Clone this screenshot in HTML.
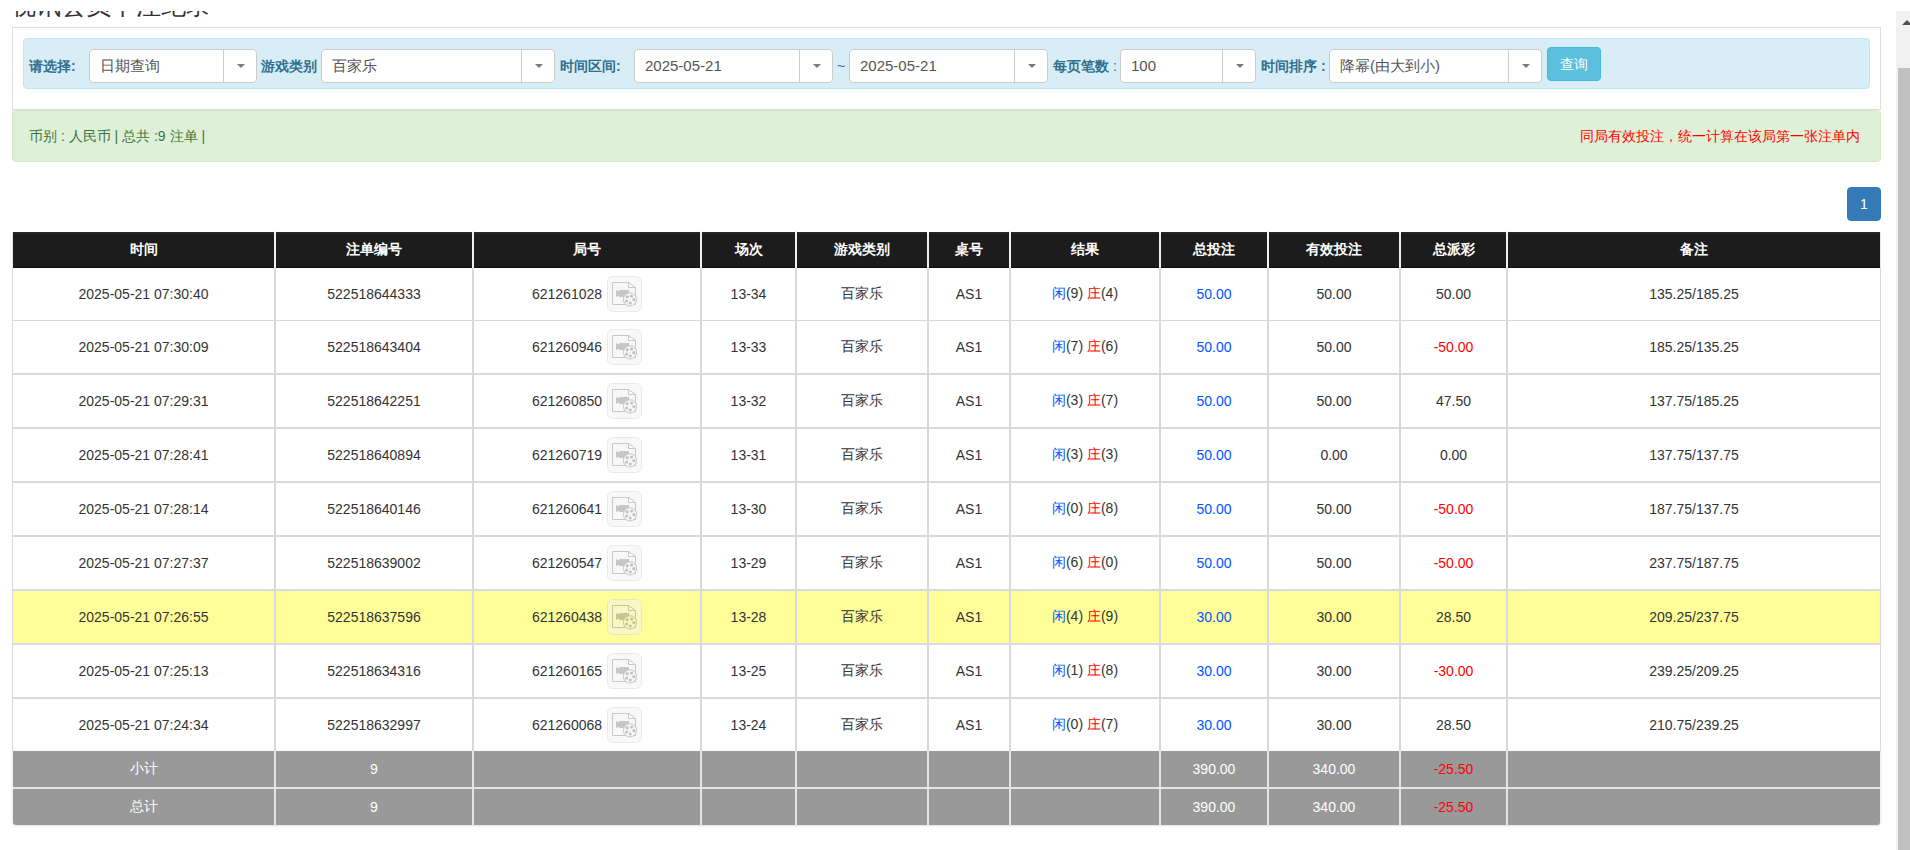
<!DOCTYPE html>
<html><head><meta charset="utf-8"><title>视讯会员下注纪录</title>
<style>
*{box-sizing:border-box;margin:0;padding:0}
html,body{width:1910px;height:850px;overflow:hidden;background:#fff}
body{font-family:"Liberation Sans",sans-serif;font-size:14px;color:#333;position:relative}
.abs{position:absolute}
.title{position:absolute;left:11px;top:-10px;font-size:25px;line-height:30px;color:#333;white-space:nowrap}
.panel{position:absolute;left:12px;top:27px;width:1869px;height:83px;border:1px solid #ddd;background:#fff}
.filter{position:absolute;left:23px;top:38px;width:1847px;height:51px;background:#d9edf7;border:1px solid #bce8f1;border-radius:4px}
.lbl{position:absolute;top:56px;line-height:20px;font-size:14px;font-weight:bold;color:#31708f;white-space:nowrap}
.sel{position:absolute;top:49px;height:34px;background:#fff;border:1px solid #ccc;border-radius:4px}
.sel .t{position:absolute;left:10px;top:0;line-height:32px;font-size:15px;color:#555;white-space:nowrap}
.sel .d{position:absolute;top:0;bottom:0;width:1px;background:#ccc}
.sel .ar{position:absolute;top:14px;width:0;height:0;border-left:4px solid transparent;border-right:4px solid transparent;border-top:4px solid #7b7b7b}
.btn{position:absolute;left:1547px;top:47px;width:54px;height:34px;background:#5bc0de;border:1px solid #46b8da;border-radius:4px;color:#fff;font-size:14px;line-height:32px;text-align:center}
.alert{position:absolute;left:12px;top:110px;width:1869px;height:52px;background:#dff0d8;border:1px solid #d6e9c6;border-radius:4px;color:#3c763d}
.alert .l{position:absolute;left:16px;top:15px;line-height:20px;white-space:nowrap}
.alert .r{position:absolute;right:20px;top:15px;line-height:20px;color:#f00;white-space:nowrap}
.page{position:absolute;left:1847px;top:187px;width:34px;height:34px;background:#337ab7;border:1px solid #337ab7;border-radius:4px;color:#fff;text-align:center;line-height:32px;font-size:14px}
.hd{position:absolute;left:13px;top:232px;width:1867px;height:36px;background:#1c1c1c;border-top:2px solid #272727;border-bottom:1px solid #0d0d0d}
.hdl{position:absolute;top:232px;width:1px;height:36px;background:#e6e6e6}
.cell{position:absolute;display:flex;align-items:center;justify-content:center;white-space:nowrap}
.hc{color:#fff;font-weight:bold;font-size:14px}
.ic{display:inline-block;vertical-align:middle;margin-left:5px;opacity:.5}
.in{display:block;white-space:nowrap}
.cover{position:absolute;left:0;top:0;width:1910px;height:11px;background:#fff}
.bl{color:#0055ff}.rd{color:#ff0000}
.ft{color:#fff}
.sbtrack{position:absolute;left:1896px;top:11px;width:14px;height:839px;background:#f1f1f1}
.sbthumb{position:absolute;left:1898px;top:68px;width:12px;height:782px;background:#c1c1c1}
.sbarrow{position:absolute;left:1902px;top:20px;width:0;height:0;border-left:5px solid transparent;border-right:5px solid transparent;border-bottom:5px solid #505050}
</style></head><body>
<div class="title">视讯会员下注纪录</div>
<div class="panel"></div>
<div class="filter"></div>

<div class="lbl" style="left:29px">请选择:</div>
<div class="sel" style="left:89px;width:168px"><div class="t">日期查询</div><div class="d" style="left:133px"></div><div class="ar" style="left:147px"></div></div>
<div class="lbl" style="left:261px">游戏类别</div>
<div class="sel" style="left:321px;width:234px"><div class="t">百家乐</div><div class="d" style="left:199px"></div><div class="ar" style="left:213px"></div></div>
<div class="lbl" style="left:560px">时间区间:</div>
<div class="sel" style="left:634px;width:199px"><div class="t">2025-05-21</div><div class="d" style="left:164px"></div><div class="ar" style="left:178px"></div></div>
<div class="abs" style="left:837px;top:56px;line-height:20px;color:#31708f">~</div>
<div class="sel" style="left:849px;width:199px"><div class="t">2025-05-21</div><div class="d" style="left:164px"></div><div class="ar" style="left:178px"></div></div>
<div class="lbl" style="left:1053px">每页笔数 <span style="font-weight:normal">:</span></div>
<div class="sel" style="left:1120px;width:136px"><div class="t">100</div><div class="d" style="left:101px"></div><div class="ar" style="left:115px"></div></div>
<div class="lbl" style="left:1261px">时间排序 :</div>
<div class="sel" style="left:1329px;width:213px"><div class="t">降幂(由大到小)</div><div class="d" style="left:178px"></div><div class="ar" style="left:192px"></div></div>
<div class="btn">查询</div>
<div class="alert"><div class="l">币别 : 人民币 | 总共 :9 注单 |</div><div class="r">同局有效投注，统一计算在该局第一张注单内</div></div>
<div class="page">1</div>
<div class="hd"></div><div class="hdl" style="left:12px"></div><div class="hdl" style="left:1880px"></div>
<div class="cell hc" style="left:13px;top:232px;width:261px;height:36px">时间</div>
<div class="cell hc" style="left:276px;top:232px;width:196px;height:36px">注单编号</div>
<div class="cell hc" style="left:474px;top:232px;width:226px;height:36px">局号</div>
<div class="cell hc" style="left:702px;top:232px;width:93px;height:36px">场次</div>
<div class="cell hc" style="left:797px;top:232px;width:130px;height:36px">游戏类别</div>
<div class="cell hc" style="left:929px;top:232px;width:80px;height:36px">桌号</div>
<div class="cell hc" style="left:1011px;top:232px;width:148px;height:36px">结果</div>
<div class="cell hc" style="left:1161px;top:232px;width:106px;height:36px">总投注</div>
<div class="cell hc" style="left:1269px;top:232px;width:130px;height:36px">有效投注</div>
<div class="cell hc" style="left:1401px;top:232px;width:105px;height:36px">总派彩</div>
<div class="cell hc" style="left:1508px;top:232px;width:372px;height:36px">备注</div>
<div class="abs" style="left:274px;top:231px;width:2px;height:37px;background:#efefef"></div>
<div class="abs" style="left:472px;top:231px;width:2px;height:37px;background:#efefef"></div>
<div class="abs" style="left:700px;top:231px;width:2px;height:37px;background:#efefef"></div>
<div class="abs" style="left:795px;top:231px;width:2px;height:37px;background:#efefef"></div>
<div class="abs" style="left:927px;top:231px;width:2px;height:37px;background:#efefef"></div>
<div class="abs" style="left:1009px;top:231px;width:2px;height:37px;background:#efefef"></div>
<div class="abs" style="left:1159px;top:231px;width:2px;height:37px;background:#efefef"></div>
<div class="abs" style="left:1267px;top:231px;width:2px;height:37px;background:#efefef"></div>
<div class="abs" style="left:1399px;top:231px;width:2px;height:37px;background:#efefef"></div>
<div class="abs" style="left:1506px;top:231px;width:2px;height:37px;background:#efefef"></div>
<div class="abs" style="left:12px;top:268px;width:1869px;height:52px;background:#fff"></div>
<div class="abs" style="left:12px;top:320px;width:1869px;height:1px;background:#d9d9d9"></div>
<div class="cell" style="left:13px;top:268px;width:261px;height:52px"><span class="in">2025-05-21 07:30:40</span></div>
<div class="cell" style="left:276px;top:268px;width:196px;height:52px"><span class="in">522518644333</span></div>
<div class="cell" style="left:474px;top:268px;width:226px;height:52px"><span class="in"><span style="position:relative;top:1px">621261028</span><svg class="ic" width="35" height="36" viewBox="0 0 35 36"><rect x="0.5" y="0.5" width="34" height="35" rx="5" ry="5" fill="#f3f3f3" stroke="#d5d5d5"/><path d="M5.5 6.5 H21.5 L28.5 12 V28.5 H5.5 Z" fill="#f1f1f1" stroke="#939393"/><path d="M21.5 6.5 V11.5 H28.5 Z" fill="#fdfdfd" stroke="#939393"/><path d="M9 14 L11.3 15.3 L12.6 14 H22 V21 H12.6 L11.3 19.8 L9 21 Z" fill="#919191"/><circle cx="23" cy="23.4" r="6.6" fill="#f5f5f5" stroke="#8d8d8d"/><circle cx="20.2" cy="20.8" r="1.6" fill="#858585"/><circle cx="24.6" cy="20" r="1.6" fill="#858585"/><circle cx="26.9" cy="23.7" r="1.6" fill="#858585"/><circle cx="23.2" cy="27" r="1.6" fill="#858585"/><circle cx="19.6" cy="25" r="1.6" fill="#858585"/><circle cx="23" cy="23.4" r="0.5" fill="#919191"/></svg></span></div>
<div class="cell" style="left:702px;top:268px;width:93px;height:52px"><span class="in">13-34</span></div>
<div class="cell" style="left:797px;top:268px;width:130px;height:52px"><span class="in">百家乐</span></div>
<div class="cell" style="left:929px;top:268px;width:80px;height:52px"><span class="in">AS1</span></div>
<div class="cell" style="left:1011px;top:268px;width:148px;height:52px"><span class="in"><span class="bl">闲</span>(9) <span class="rd">庄</span>(4)</span></div>
<div class="cell" style="left:1161px;top:268px;width:106px;height:52px"><span class="in"><span class="bl">50.00</span></span></div>
<div class="cell" style="left:1269px;top:268px;width:130px;height:52px"><span class="in">50.00</span></div>
<div class="cell" style="left:1401px;top:268px;width:105px;height:52px"><span class="in">50.00</span></div>
<div class="cell" style="left:1508px;top:268px;width:372px;height:52px"><span class="in">135.25/185.25</span></div>
<div class="abs" style="left:274px;top:268px;width:2px;height:53px;background:#d9d9d9"></div>
<div class="abs" style="left:472px;top:268px;width:2px;height:53px;background:#d9d9d9"></div>
<div class="abs" style="left:700px;top:268px;width:2px;height:53px;background:#d9d9d9"></div>
<div class="abs" style="left:795px;top:268px;width:2px;height:53px;background:#d9d9d9"></div>
<div class="abs" style="left:927px;top:268px;width:2px;height:53px;background:#d9d9d9"></div>
<div class="abs" style="left:1009px;top:268px;width:2px;height:53px;background:#d9d9d9"></div>
<div class="abs" style="left:1159px;top:268px;width:2px;height:53px;background:#d9d9d9"></div>
<div class="abs" style="left:1267px;top:268px;width:2px;height:53px;background:#d9d9d9"></div>
<div class="abs" style="left:1399px;top:268px;width:2px;height:53px;background:#d9d9d9"></div>
<div class="abs" style="left:1506px;top:268px;width:2px;height:53px;background:#d9d9d9"></div>
<div class="abs" style="left:12px;top:268px;width:1px;height:53px;background:#d9d9d9"></div>
<div class="abs" style="left:1880px;top:268px;width:1px;height:53px;background:#d9d9d9"></div>
<div class="abs" style="left:12px;top:321px;width:1869px;height:52px;background:#fff"></div>
<div class="abs" style="left:12px;top:373px;width:1869px;height:2px;background:#d9d9d9"></div>
<div class="cell" style="left:13px;top:321px;width:261px;height:52px"><span class="in">2025-05-21 07:30:09</span></div>
<div class="cell" style="left:276px;top:321px;width:196px;height:52px"><span class="in">522518643404</span></div>
<div class="cell" style="left:474px;top:321px;width:226px;height:52px"><span class="in"><span style="position:relative;top:1px">621260946</span><svg class="ic" width="35" height="36" viewBox="0 0 35 36"><rect x="0.5" y="0.5" width="34" height="35" rx="5" ry="5" fill="#f3f3f3" stroke="#d5d5d5"/><path d="M5.5 6.5 H21.5 L28.5 12 V28.5 H5.5 Z" fill="#f1f1f1" stroke="#939393"/><path d="M21.5 6.5 V11.5 H28.5 Z" fill="#fdfdfd" stroke="#939393"/><path d="M9 14 L11.3 15.3 L12.6 14 H22 V21 H12.6 L11.3 19.8 L9 21 Z" fill="#919191"/><circle cx="23" cy="23.4" r="6.6" fill="#f5f5f5" stroke="#8d8d8d"/><circle cx="20.2" cy="20.8" r="1.6" fill="#858585"/><circle cx="24.6" cy="20" r="1.6" fill="#858585"/><circle cx="26.9" cy="23.7" r="1.6" fill="#858585"/><circle cx="23.2" cy="27" r="1.6" fill="#858585"/><circle cx="19.6" cy="25" r="1.6" fill="#858585"/><circle cx="23" cy="23.4" r="0.5" fill="#919191"/></svg></span></div>
<div class="cell" style="left:702px;top:321px;width:93px;height:52px"><span class="in">13-33</span></div>
<div class="cell" style="left:797px;top:321px;width:130px;height:52px"><span class="in">百家乐</span></div>
<div class="cell" style="left:929px;top:321px;width:80px;height:52px"><span class="in">AS1</span></div>
<div class="cell" style="left:1011px;top:321px;width:148px;height:52px"><span class="in"><span class="bl">闲</span>(7) <span class="rd">庄</span>(6)</span></div>
<div class="cell" style="left:1161px;top:321px;width:106px;height:52px"><span class="in"><span class="bl">50.00</span></span></div>
<div class="cell" style="left:1269px;top:321px;width:130px;height:52px"><span class="in">50.00</span></div>
<div class="cell" style="left:1401px;top:321px;width:105px;height:52px"><span class="in"><span class="rd">-50.00</span></span></div>
<div class="cell" style="left:1508px;top:321px;width:372px;height:52px"><span class="in">185.25/135.25</span></div>
<div class="abs" style="left:274px;top:321px;width:2px;height:54px;background:#d9d9d9"></div>
<div class="abs" style="left:472px;top:321px;width:2px;height:54px;background:#d9d9d9"></div>
<div class="abs" style="left:700px;top:321px;width:2px;height:54px;background:#d9d9d9"></div>
<div class="abs" style="left:795px;top:321px;width:2px;height:54px;background:#d9d9d9"></div>
<div class="abs" style="left:927px;top:321px;width:2px;height:54px;background:#d9d9d9"></div>
<div class="abs" style="left:1009px;top:321px;width:2px;height:54px;background:#d9d9d9"></div>
<div class="abs" style="left:1159px;top:321px;width:2px;height:54px;background:#d9d9d9"></div>
<div class="abs" style="left:1267px;top:321px;width:2px;height:54px;background:#d9d9d9"></div>
<div class="abs" style="left:1399px;top:321px;width:2px;height:54px;background:#d9d9d9"></div>
<div class="abs" style="left:1506px;top:321px;width:2px;height:54px;background:#d9d9d9"></div>
<div class="abs" style="left:12px;top:321px;width:1px;height:54px;background:#d9d9d9"></div>
<div class="abs" style="left:1880px;top:321px;width:1px;height:54px;background:#d9d9d9"></div>
<div class="abs" style="left:12px;top:375px;width:1869px;height:52px;background:#fff"></div>
<div class="abs" style="left:12px;top:427px;width:1869px;height:2px;background:#d9d9d9"></div>
<div class="cell" style="left:13px;top:375px;width:261px;height:52px"><span class="in">2025-05-21 07:29:31</span></div>
<div class="cell" style="left:276px;top:375px;width:196px;height:52px"><span class="in">522518642251</span></div>
<div class="cell" style="left:474px;top:375px;width:226px;height:52px"><span class="in"><span style="position:relative;top:1px">621260850</span><svg class="ic" width="35" height="36" viewBox="0 0 35 36"><rect x="0.5" y="0.5" width="34" height="35" rx="5" ry="5" fill="#f3f3f3" stroke="#d5d5d5"/><path d="M5.5 6.5 H21.5 L28.5 12 V28.5 H5.5 Z" fill="#f1f1f1" stroke="#939393"/><path d="M21.5 6.5 V11.5 H28.5 Z" fill="#fdfdfd" stroke="#939393"/><path d="M9 14 L11.3 15.3 L12.6 14 H22 V21 H12.6 L11.3 19.8 L9 21 Z" fill="#919191"/><circle cx="23" cy="23.4" r="6.6" fill="#f5f5f5" stroke="#8d8d8d"/><circle cx="20.2" cy="20.8" r="1.6" fill="#858585"/><circle cx="24.6" cy="20" r="1.6" fill="#858585"/><circle cx="26.9" cy="23.7" r="1.6" fill="#858585"/><circle cx="23.2" cy="27" r="1.6" fill="#858585"/><circle cx="19.6" cy="25" r="1.6" fill="#858585"/><circle cx="23" cy="23.4" r="0.5" fill="#919191"/></svg></span></div>
<div class="cell" style="left:702px;top:375px;width:93px;height:52px"><span class="in">13-32</span></div>
<div class="cell" style="left:797px;top:375px;width:130px;height:52px"><span class="in">百家乐</span></div>
<div class="cell" style="left:929px;top:375px;width:80px;height:52px"><span class="in">AS1</span></div>
<div class="cell" style="left:1011px;top:375px;width:148px;height:52px"><span class="in"><span class="bl">闲</span>(3) <span class="rd">庄</span>(7)</span></div>
<div class="cell" style="left:1161px;top:375px;width:106px;height:52px"><span class="in"><span class="bl">50.00</span></span></div>
<div class="cell" style="left:1269px;top:375px;width:130px;height:52px"><span class="in">50.00</span></div>
<div class="cell" style="left:1401px;top:375px;width:105px;height:52px"><span class="in">47.50</span></div>
<div class="cell" style="left:1508px;top:375px;width:372px;height:52px"><span class="in">137.75/185.25</span></div>
<div class="abs" style="left:274px;top:375px;width:2px;height:54px;background:#d9d9d9"></div>
<div class="abs" style="left:472px;top:375px;width:2px;height:54px;background:#d9d9d9"></div>
<div class="abs" style="left:700px;top:375px;width:2px;height:54px;background:#d9d9d9"></div>
<div class="abs" style="left:795px;top:375px;width:2px;height:54px;background:#d9d9d9"></div>
<div class="abs" style="left:927px;top:375px;width:2px;height:54px;background:#d9d9d9"></div>
<div class="abs" style="left:1009px;top:375px;width:2px;height:54px;background:#d9d9d9"></div>
<div class="abs" style="left:1159px;top:375px;width:2px;height:54px;background:#d9d9d9"></div>
<div class="abs" style="left:1267px;top:375px;width:2px;height:54px;background:#d9d9d9"></div>
<div class="abs" style="left:1399px;top:375px;width:2px;height:54px;background:#d9d9d9"></div>
<div class="abs" style="left:1506px;top:375px;width:2px;height:54px;background:#d9d9d9"></div>
<div class="abs" style="left:12px;top:375px;width:1px;height:54px;background:#d9d9d9"></div>
<div class="abs" style="left:1880px;top:375px;width:1px;height:54px;background:#d9d9d9"></div>
<div class="abs" style="left:12px;top:429px;width:1869px;height:52px;background:#fff"></div>
<div class="abs" style="left:12px;top:481px;width:1869px;height:2px;background:#d9d9d9"></div>
<div class="cell" style="left:13px;top:429px;width:261px;height:52px"><span class="in">2025-05-21 07:28:41</span></div>
<div class="cell" style="left:276px;top:429px;width:196px;height:52px"><span class="in">522518640894</span></div>
<div class="cell" style="left:474px;top:429px;width:226px;height:52px"><span class="in"><span style="position:relative;top:1px">621260719</span><svg class="ic" width="35" height="36" viewBox="0 0 35 36"><rect x="0.5" y="0.5" width="34" height="35" rx="5" ry="5" fill="#f3f3f3" stroke="#d5d5d5"/><path d="M5.5 6.5 H21.5 L28.5 12 V28.5 H5.5 Z" fill="#f1f1f1" stroke="#939393"/><path d="M21.5 6.5 V11.5 H28.5 Z" fill="#fdfdfd" stroke="#939393"/><path d="M9 14 L11.3 15.3 L12.6 14 H22 V21 H12.6 L11.3 19.8 L9 21 Z" fill="#919191"/><circle cx="23" cy="23.4" r="6.6" fill="#f5f5f5" stroke="#8d8d8d"/><circle cx="20.2" cy="20.8" r="1.6" fill="#858585"/><circle cx="24.6" cy="20" r="1.6" fill="#858585"/><circle cx="26.9" cy="23.7" r="1.6" fill="#858585"/><circle cx="23.2" cy="27" r="1.6" fill="#858585"/><circle cx="19.6" cy="25" r="1.6" fill="#858585"/><circle cx="23" cy="23.4" r="0.5" fill="#919191"/></svg></span></div>
<div class="cell" style="left:702px;top:429px;width:93px;height:52px"><span class="in">13-31</span></div>
<div class="cell" style="left:797px;top:429px;width:130px;height:52px"><span class="in">百家乐</span></div>
<div class="cell" style="left:929px;top:429px;width:80px;height:52px"><span class="in">AS1</span></div>
<div class="cell" style="left:1011px;top:429px;width:148px;height:52px"><span class="in"><span class="bl">闲</span>(3) <span class="rd">庄</span>(3)</span></div>
<div class="cell" style="left:1161px;top:429px;width:106px;height:52px"><span class="in"><span class="bl">50.00</span></span></div>
<div class="cell" style="left:1269px;top:429px;width:130px;height:52px"><span class="in">0.00</span></div>
<div class="cell" style="left:1401px;top:429px;width:105px;height:52px"><span class="in">0.00</span></div>
<div class="cell" style="left:1508px;top:429px;width:372px;height:52px"><span class="in">137.75/137.75</span></div>
<div class="abs" style="left:274px;top:429px;width:2px;height:54px;background:#d9d9d9"></div>
<div class="abs" style="left:472px;top:429px;width:2px;height:54px;background:#d9d9d9"></div>
<div class="abs" style="left:700px;top:429px;width:2px;height:54px;background:#d9d9d9"></div>
<div class="abs" style="left:795px;top:429px;width:2px;height:54px;background:#d9d9d9"></div>
<div class="abs" style="left:927px;top:429px;width:2px;height:54px;background:#d9d9d9"></div>
<div class="abs" style="left:1009px;top:429px;width:2px;height:54px;background:#d9d9d9"></div>
<div class="abs" style="left:1159px;top:429px;width:2px;height:54px;background:#d9d9d9"></div>
<div class="abs" style="left:1267px;top:429px;width:2px;height:54px;background:#d9d9d9"></div>
<div class="abs" style="left:1399px;top:429px;width:2px;height:54px;background:#d9d9d9"></div>
<div class="abs" style="left:1506px;top:429px;width:2px;height:54px;background:#d9d9d9"></div>
<div class="abs" style="left:12px;top:429px;width:1px;height:54px;background:#d9d9d9"></div>
<div class="abs" style="left:1880px;top:429px;width:1px;height:54px;background:#d9d9d9"></div>
<div class="abs" style="left:12px;top:483px;width:1869px;height:52px;background:#fff"></div>
<div class="abs" style="left:12px;top:535px;width:1869px;height:2px;background:#d9d9d9"></div>
<div class="cell" style="left:13px;top:483px;width:261px;height:52px"><span class="in">2025-05-21 07:28:14</span></div>
<div class="cell" style="left:276px;top:483px;width:196px;height:52px"><span class="in">522518640146</span></div>
<div class="cell" style="left:474px;top:483px;width:226px;height:52px"><span class="in"><span style="position:relative;top:1px">621260641</span><svg class="ic" width="35" height="36" viewBox="0 0 35 36"><rect x="0.5" y="0.5" width="34" height="35" rx="5" ry="5" fill="#f3f3f3" stroke="#d5d5d5"/><path d="M5.5 6.5 H21.5 L28.5 12 V28.5 H5.5 Z" fill="#f1f1f1" stroke="#939393"/><path d="M21.5 6.5 V11.5 H28.5 Z" fill="#fdfdfd" stroke="#939393"/><path d="M9 14 L11.3 15.3 L12.6 14 H22 V21 H12.6 L11.3 19.8 L9 21 Z" fill="#919191"/><circle cx="23" cy="23.4" r="6.6" fill="#f5f5f5" stroke="#8d8d8d"/><circle cx="20.2" cy="20.8" r="1.6" fill="#858585"/><circle cx="24.6" cy="20" r="1.6" fill="#858585"/><circle cx="26.9" cy="23.7" r="1.6" fill="#858585"/><circle cx="23.2" cy="27" r="1.6" fill="#858585"/><circle cx="19.6" cy="25" r="1.6" fill="#858585"/><circle cx="23" cy="23.4" r="0.5" fill="#919191"/></svg></span></div>
<div class="cell" style="left:702px;top:483px;width:93px;height:52px"><span class="in">13-30</span></div>
<div class="cell" style="left:797px;top:483px;width:130px;height:52px"><span class="in">百家乐</span></div>
<div class="cell" style="left:929px;top:483px;width:80px;height:52px"><span class="in">AS1</span></div>
<div class="cell" style="left:1011px;top:483px;width:148px;height:52px"><span class="in"><span class="bl">闲</span>(0) <span class="rd">庄</span>(8)</span></div>
<div class="cell" style="left:1161px;top:483px;width:106px;height:52px"><span class="in"><span class="bl">50.00</span></span></div>
<div class="cell" style="left:1269px;top:483px;width:130px;height:52px"><span class="in">50.00</span></div>
<div class="cell" style="left:1401px;top:483px;width:105px;height:52px"><span class="in"><span class="rd">-50.00</span></span></div>
<div class="cell" style="left:1508px;top:483px;width:372px;height:52px"><span class="in">187.75/137.75</span></div>
<div class="abs" style="left:274px;top:483px;width:2px;height:54px;background:#d9d9d9"></div>
<div class="abs" style="left:472px;top:483px;width:2px;height:54px;background:#d9d9d9"></div>
<div class="abs" style="left:700px;top:483px;width:2px;height:54px;background:#d9d9d9"></div>
<div class="abs" style="left:795px;top:483px;width:2px;height:54px;background:#d9d9d9"></div>
<div class="abs" style="left:927px;top:483px;width:2px;height:54px;background:#d9d9d9"></div>
<div class="abs" style="left:1009px;top:483px;width:2px;height:54px;background:#d9d9d9"></div>
<div class="abs" style="left:1159px;top:483px;width:2px;height:54px;background:#d9d9d9"></div>
<div class="abs" style="left:1267px;top:483px;width:2px;height:54px;background:#d9d9d9"></div>
<div class="abs" style="left:1399px;top:483px;width:2px;height:54px;background:#d9d9d9"></div>
<div class="abs" style="left:1506px;top:483px;width:2px;height:54px;background:#d9d9d9"></div>
<div class="abs" style="left:12px;top:483px;width:1px;height:54px;background:#d9d9d9"></div>
<div class="abs" style="left:1880px;top:483px;width:1px;height:54px;background:#d9d9d9"></div>
<div class="abs" style="left:12px;top:537px;width:1869px;height:52px;background:#fff"></div>
<div class="abs" style="left:12px;top:589px;width:1869px;height:2px;background:#d9d9e3"></div>
<div class="cell" style="left:13px;top:537px;width:261px;height:52px"><span class="in">2025-05-21 07:27:37</span></div>
<div class="cell" style="left:276px;top:537px;width:196px;height:52px"><span class="in">522518639002</span></div>
<div class="cell" style="left:474px;top:537px;width:226px;height:52px"><span class="in"><span style="position:relative;top:1px">621260547</span><svg class="ic" width="35" height="36" viewBox="0 0 35 36"><rect x="0.5" y="0.5" width="34" height="35" rx="5" ry="5" fill="#f3f3f3" stroke="#d5d5d5"/><path d="M5.5 6.5 H21.5 L28.5 12 V28.5 H5.5 Z" fill="#f1f1f1" stroke="#939393"/><path d="M21.5 6.5 V11.5 H28.5 Z" fill="#fdfdfd" stroke="#939393"/><path d="M9 14 L11.3 15.3 L12.6 14 H22 V21 H12.6 L11.3 19.8 L9 21 Z" fill="#919191"/><circle cx="23" cy="23.4" r="6.6" fill="#f5f5f5" stroke="#8d8d8d"/><circle cx="20.2" cy="20.8" r="1.6" fill="#858585"/><circle cx="24.6" cy="20" r="1.6" fill="#858585"/><circle cx="26.9" cy="23.7" r="1.6" fill="#858585"/><circle cx="23.2" cy="27" r="1.6" fill="#858585"/><circle cx="19.6" cy="25" r="1.6" fill="#858585"/><circle cx="23" cy="23.4" r="0.5" fill="#919191"/></svg></span></div>
<div class="cell" style="left:702px;top:537px;width:93px;height:52px"><span class="in">13-29</span></div>
<div class="cell" style="left:797px;top:537px;width:130px;height:52px"><span class="in">百家乐</span></div>
<div class="cell" style="left:929px;top:537px;width:80px;height:52px"><span class="in">AS1</span></div>
<div class="cell" style="left:1011px;top:537px;width:148px;height:52px"><span class="in"><span class="bl">闲</span>(6) <span class="rd">庄</span>(0)</span></div>
<div class="cell" style="left:1161px;top:537px;width:106px;height:52px"><span class="in"><span class="bl">50.00</span></span></div>
<div class="cell" style="left:1269px;top:537px;width:130px;height:52px"><span class="in">50.00</span></div>
<div class="cell" style="left:1401px;top:537px;width:105px;height:52px"><span class="in"><span class="rd">-50.00</span></span></div>
<div class="cell" style="left:1508px;top:537px;width:372px;height:52px"><span class="in">237.75/187.75</span></div>
<div class="abs" style="left:274px;top:537px;width:2px;height:54px;background:#d9d9d9"></div>
<div class="abs" style="left:472px;top:537px;width:2px;height:54px;background:#d9d9d9"></div>
<div class="abs" style="left:700px;top:537px;width:2px;height:54px;background:#d9d9d9"></div>
<div class="abs" style="left:795px;top:537px;width:2px;height:54px;background:#d9d9d9"></div>
<div class="abs" style="left:927px;top:537px;width:2px;height:54px;background:#d9d9d9"></div>
<div class="abs" style="left:1009px;top:537px;width:2px;height:54px;background:#d9d9d9"></div>
<div class="abs" style="left:1159px;top:537px;width:2px;height:54px;background:#d9d9d9"></div>
<div class="abs" style="left:1267px;top:537px;width:2px;height:54px;background:#d9d9d9"></div>
<div class="abs" style="left:1399px;top:537px;width:2px;height:54px;background:#d9d9d9"></div>
<div class="abs" style="left:1506px;top:537px;width:2px;height:54px;background:#d9d9d9"></div>
<div class="abs" style="left:12px;top:537px;width:1px;height:54px;background:#d9d9d9"></div>
<div class="abs" style="left:1880px;top:537px;width:1px;height:54px;background:#d9d9d9"></div>
<div class="abs" style="left:12px;top:591px;width:1869px;height:52px;background:#ffff99"></div>
<div class="abs" style="left:12px;top:643px;width:1869px;height:2px;background:#d9d9e3"></div>
<div class="cell" style="left:13px;top:591px;width:261px;height:52px"><span class="in">2025-05-21 07:26:55</span></div>
<div class="cell" style="left:276px;top:591px;width:196px;height:52px"><span class="in">522518637596</span></div>
<div class="cell" style="left:474px;top:591px;width:226px;height:52px"><span class="in"><span style="position:relative;top:1px">621260438</span><svg class="ic" width="35" height="36" viewBox="0 0 35 36"><rect x="0.5" y="0.5" width="34" height="35" rx="5" ry="5" fill="#f3f3f3" stroke="#d5d5d5"/><path d="M5.5 6.5 H21.5 L28.5 12 V28.5 H5.5 Z" fill="#f1f1f1" stroke="#939393"/><path d="M21.5 6.5 V11.5 H28.5 Z" fill="#fdfdfd" stroke="#939393"/><path d="M9 14 L11.3 15.3 L12.6 14 H22 V21 H12.6 L11.3 19.8 L9 21 Z" fill="#919191"/><circle cx="23" cy="23.4" r="6.6" fill="#f5f5f5" stroke="#8d8d8d"/><circle cx="20.2" cy="20.8" r="1.6" fill="#858585"/><circle cx="24.6" cy="20" r="1.6" fill="#858585"/><circle cx="26.9" cy="23.7" r="1.6" fill="#858585"/><circle cx="23.2" cy="27" r="1.6" fill="#858585"/><circle cx="19.6" cy="25" r="1.6" fill="#858585"/><circle cx="23" cy="23.4" r="0.5" fill="#919191"/></svg></span></div>
<div class="cell" style="left:702px;top:591px;width:93px;height:52px"><span class="in">13-28</span></div>
<div class="cell" style="left:797px;top:591px;width:130px;height:52px"><span class="in">百家乐</span></div>
<div class="cell" style="left:929px;top:591px;width:80px;height:52px"><span class="in">AS1</span></div>
<div class="cell" style="left:1011px;top:591px;width:148px;height:52px"><span class="in"><span class="bl">闲</span>(4) <span class="rd">庄</span>(9)</span></div>
<div class="cell" style="left:1161px;top:591px;width:106px;height:52px"><span class="in"><span class="bl">30.00</span></span></div>
<div class="cell" style="left:1269px;top:591px;width:130px;height:52px"><span class="in">30.00</span></div>
<div class="cell" style="left:1401px;top:591px;width:105px;height:52px"><span class="in">28.50</span></div>
<div class="cell" style="left:1508px;top:591px;width:372px;height:52px"><span class="in">209.25/237.75</span></div>
<div class="abs" style="left:274px;top:591px;width:2px;height:54px;background:#d9d9e3"></div>
<div class="abs" style="left:472px;top:591px;width:2px;height:54px;background:#d9d9e3"></div>
<div class="abs" style="left:700px;top:591px;width:2px;height:54px;background:#d9d9e3"></div>
<div class="abs" style="left:795px;top:591px;width:2px;height:54px;background:#d9d9e3"></div>
<div class="abs" style="left:927px;top:591px;width:2px;height:54px;background:#d9d9e3"></div>
<div class="abs" style="left:1009px;top:591px;width:2px;height:54px;background:#d9d9e3"></div>
<div class="abs" style="left:1159px;top:591px;width:2px;height:54px;background:#d9d9e3"></div>
<div class="abs" style="left:1267px;top:591px;width:2px;height:54px;background:#d9d9e3"></div>
<div class="abs" style="left:1399px;top:591px;width:2px;height:54px;background:#d9d9e3"></div>
<div class="abs" style="left:1506px;top:591px;width:2px;height:54px;background:#d9d9e3"></div>
<div class="abs" style="left:12px;top:591px;width:1px;height:54px;background:#d9d9e3"></div>
<div class="abs" style="left:1880px;top:591px;width:1px;height:54px;background:#d9d9e3"></div>
<div class="abs" style="left:12px;top:645px;width:1869px;height:52px;background:#fff"></div>
<div class="abs" style="left:12px;top:697px;width:1869px;height:2px;background:#d9d9d9"></div>
<div class="cell" style="left:13px;top:645px;width:261px;height:52px"><span class="in">2025-05-21 07:25:13</span></div>
<div class="cell" style="left:276px;top:645px;width:196px;height:52px"><span class="in">522518634316</span></div>
<div class="cell" style="left:474px;top:645px;width:226px;height:52px"><span class="in"><span style="position:relative;top:1px">621260165</span><svg class="ic" width="35" height="36" viewBox="0 0 35 36"><rect x="0.5" y="0.5" width="34" height="35" rx="5" ry="5" fill="#f3f3f3" stroke="#d5d5d5"/><path d="M5.5 6.5 H21.5 L28.5 12 V28.5 H5.5 Z" fill="#f1f1f1" stroke="#939393"/><path d="M21.5 6.5 V11.5 H28.5 Z" fill="#fdfdfd" stroke="#939393"/><path d="M9 14 L11.3 15.3 L12.6 14 H22 V21 H12.6 L11.3 19.8 L9 21 Z" fill="#919191"/><circle cx="23" cy="23.4" r="6.6" fill="#f5f5f5" stroke="#8d8d8d"/><circle cx="20.2" cy="20.8" r="1.6" fill="#858585"/><circle cx="24.6" cy="20" r="1.6" fill="#858585"/><circle cx="26.9" cy="23.7" r="1.6" fill="#858585"/><circle cx="23.2" cy="27" r="1.6" fill="#858585"/><circle cx="19.6" cy="25" r="1.6" fill="#858585"/><circle cx="23" cy="23.4" r="0.5" fill="#919191"/></svg></span></div>
<div class="cell" style="left:702px;top:645px;width:93px;height:52px"><span class="in">13-25</span></div>
<div class="cell" style="left:797px;top:645px;width:130px;height:52px"><span class="in">百家乐</span></div>
<div class="cell" style="left:929px;top:645px;width:80px;height:52px"><span class="in">AS1</span></div>
<div class="cell" style="left:1011px;top:645px;width:148px;height:52px"><span class="in"><span class="bl">闲</span>(1) <span class="rd">庄</span>(8)</span></div>
<div class="cell" style="left:1161px;top:645px;width:106px;height:52px"><span class="in"><span class="bl">30.00</span></span></div>
<div class="cell" style="left:1269px;top:645px;width:130px;height:52px"><span class="in">30.00</span></div>
<div class="cell" style="left:1401px;top:645px;width:105px;height:52px"><span class="in"><span class="rd">-30.00</span></span></div>
<div class="cell" style="left:1508px;top:645px;width:372px;height:52px"><span class="in">239.25/209.25</span></div>
<div class="abs" style="left:274px;top:645px;width:2px;height:54px;background:#d9d9d9"></div>
<div class="abs" style="left:472px;top:645px;width:2px;height:54px;background:#d9d9d9"></div>
<div class="abs" style="left:700px;top:645px;width:2px;height:54px;background:#d9d9d9"></div>
<div class="abs" style="left:795px;top:645px;width:2px;height:54px;background:#d9d9d9"></div>
<div class="abs" style="left:927px;top:645px;width:2px;height:54px;background:#d9d9d9"></div>
<div class="abs" style="left:1009px;top:645px;width:2px;height:54px;background:#d9d9d9"></div>
<div class="abs" style="left:1159px;top:645px;width:2px;height:54px;background:#d9d9d9"></div>
<div class="abs" style="left:1267px;top:645px;width:2px;height:54px;background:#d9d9d9"></div>
<div class="abs" style="left:1399px;top:645px;width:2px;height:54px;background:#d9d9d9"></div>
<div class="abs" style="left:1506px;top:645px;width:2px;height:54px;background:#d9d9d9"></div>
<div class="abs" style="left:12px;top:645px;width:1px;height:54px;background:#d9d9d9"></div>
<div class="abs" style="left:1880px;top:645px;width:1px;height:54px;background:#d9d9d9"></div>
<div class="abs" style="left:12px;top:699px;width:1869px;height:52px;background:#fff"></div>
<div class="cell" style="left:13px;top:699px;width:261px;height:52px"><span class="in">2025-05-21 07:24:34</span></div>
<div class="cell" style="left:276px;top:699px;width:196px;height:52px"><span class="in">522518632997</span></div>
<div class="cell" style="left:474px;top:699px;width:226px;height:52px"><span class="in"><span style="position:relative;top:1px">621260068</span><svg class="ic" width="35" height="36" viewBox="0 0 35 36"><rect x="0.5" y="0.5" width="34" height="35" rx="5" ry="5" fill="#f3f3f3" stroke="#d5d5d5"/><path d="M5.5 6.5 H21.5 L28.5 12 V28.5 H5.5 Z" fill="#f1f1f1" stroke="#939393"/><path d="M21.5 6.5 V11.5 H28.5 Z" fill="#fdfdfd" stroke="#939393"/><path d="M9 14 L11.3 15.3 L12.6 14 H22 V21 H12.6 L11.3 19.8 L9 21 Z" fill="#919191"/><circle cx="23" cy="23.4" r="6.6" fill="#f5f5f5" stroke="#8d8d8d"/><circle cx="20.2" cy="20.8" r="1.6" fill="#858585"/><circle cx="24.6" cy="20" r="1.6" fill="#858585"/><circle cx="26.9" cy="23.7" r="1.6" fill="#858585"/><circle cx="23.2" cy="27" r="1.6" fill="#858585"/><circle cx="19.6" cy="25" r="1.6" fill="#858585"/><circle cx="23" cy="23.4" r="0.5" fill="#919191"/></svg></span></div>
<div class="cell" style="left:702px;top:699px;width:93px;height:52px"><span class="in">13-24</span></div>
<div class="cell" style="left:797px;top:699px;width:130px;height:52px"><span class="in">百家乐</span></div>
<div class="cell" style="left:929px;top:699px;width:80px;height:52px"><span class="in">AS1</span></div>
<div class="cell" style="left:1011px;top:699px;width:148px;height:52px"><span class="in"><span class="bl">闲</span>(0) <span class="rd">庄</span>(7)</span></div>
<div class="cell" style="left:1161px;top:699px;width:106px;height:52px"><span class="in"><span class="bl">30.00</span></span></div>
<div class="cell" style="left:1269px;top:699px;width:130px;height:52px"><span class="in">30.00</span></div>
<div class="cell" style="left:1401px;top:699px;width:105px;height:52px"><span class="in">28.50</span></div>
<div class="cell" style="left:1508px;top:699px;width:372px;height:52px"><span class="in">210.75/239.25</span></div>
<div class="abs" style="left:274px;top:699px;width:2px;height:52px;background:#d9d9d9"></div>
<div class="abs" style="left:472px;top:699px;width:2px;height:52px;background:#d9d9d9"></div>
<div class="abs" style="left:700px;top:699px;width:2px;height:52px;background:#d9d9d9"></div>
<div class="abs" style="left:795px;top:699px;width:2px;height:52px;background:#d9d9d9"></div>
<div class="abs" style="left:927px;top:699px;width:2px;height:52px;background:#d9d9d9"></div>
<div class="abs" style="left:1009px;top:699px;width:2px;height:52px;background:#d9d9d9"></div>
<div class="abs" style="left:1159px;top:699px;width:2px;height:52px;background:#d9d9d9"></div>
<div class="abs" style="left:1267px;top:699px;width:2px;height:52px;background:#d9d9d9"></div>
<div class="abs" style="left:1399px;top:699px;width:2px;height:52px;background:#d9d9d9"></div>
<div class="abs" style="left:1506px;top:699px;width:2px;height:52px;background:#d9d9d9"></div>
<div class="abs" style="left:12px;top:699px;width:1px;height:52px;background:#d9d9d9"></div>
<div class="abs" style="left:1880px;top:699px;width:1px;height:52px;background:#d9d9d9"></div>
<div class="abs" style="left:12px;top:751px;width:1869px;height:74px;background:#f0f0f0;border-radius:0 0 4px 4px;box-shadow:0 1px 2px rgba(0,0,0,.12)"></div><div class="abs" style="left:13px;top:751px;width:1867px;height:74px;background:#999;border-radius:0 0 3px 3px"></div>
<div class="abs" style="left:13px;top:787px;width:1867px;height:2px;background:#e4e4e4"></div>
<div class="abs" style="left:274px;top:751px;width:2px;height:74px;background:#e4e4e4"></div>
<div class="abs" style="left:472px;top:751px;width:2px;height:74px;background:#e4e4e4"></div>
<div class="abs" style="left:700px;top:751px;width:2px;height:74px;background:#e4e4e4"></div>
<div class="abs" style="left:795px;top:751px;width:2px;height:74px;background:#e4e4e4"></div>
<div class="abs" style="left:927px;top:751px;width:2px;height:74px;background:#e4e4e4"></div>
<div class="abs" style="left:1009px;top:751px;width:2px;height:74px;background:#e4e4e4"></div>
<div class="abs" style="left:1159px;top:751px;width:2px;height:74px;background:#e4e4e4"></div>
<div class="abs" style="left:1267px;top:751px;width:2px;height:74px;background:#e4e4e4"></div>
<div class="abs" style="left:1399px;top:751px;width:2px;height:74px;background:#e4e4e4"></div>
<div class="abs" style="left:1506px;top:751px;width:2px;height:74px;background:#e4e4e4"></div>
<div class="cell ft" style="left:13px;top:751px;width:261px;height:36px">小计</div>
<div class="cell ft" style="left:276px;top:751px;width:196px;height:36px">9</div>
<div class="cell ft" style="left:1161px;top:751px;width:106px;height:36px">390.00</div>
<div class="cell ft" style="left:1269px;top:751px;width:130px;height:36px">340.00</div>
<div class="cell ft" style="left:1401px;top:751px;width:105px;height:36px"><span class="rd">-25.50</span></div>
<div class="cell ft" style="left:13px;top:789px;width:261px;height:36px">总计</div>
<div class="cell ft" style="left:276px;top:789px;width:196px;height:36px">9</div>
<div class="cell ft" style="left:1161px;top:789px;width:106px;height:36px">390.00</div>
<div class="cell ft" style="left:1269px;top:789px;width:130px;height:36px">340.00</div>
<div class="cell ft" style="left:1401px;top:789px;width:105px;height:36px"><span class="rd">-25.50</span></div>
<div class="cover"></div>
<div class="sbtrack"></div><div class="sbthumb"></div><div class="sbarrow"></div>
</body></html>
